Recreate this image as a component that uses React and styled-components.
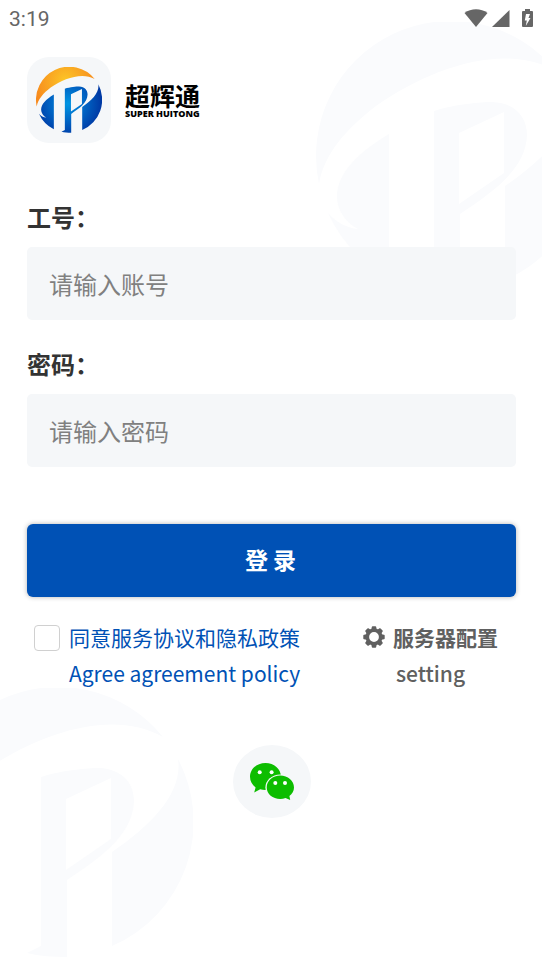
import React from 'react'
import { useState } from 'react'
import styled, { createGlobalStyle } from 'styled-components'

const GlobalStyle = createGlobalStyle`
  * {
    box-sizing: border-box;
  }
  body {
    margin: 0;
    background: #ffffff;
    font-family: 'Noto Sans CJK SC', 'Noto Sans', sans-serif;
  }
  button, input {
    font-family: inherit;
  }
`

const Page = styled.div`
  position: relative;
  min-height: 100vh;
  overflow: hidden;
  background: #ffffff;
`

// faded emblems that lie behind the form
const Watermark = styled.div`
  position: absolute;
  width: 270px;
  height: 270px;
  color: #fafbfd;
  ${({ $place }) => $place === 'top'
    ? 'top: 22px; right: -44px;'
    : 'bottom: 7px; left: -77px;'}

  svg {
    display: block;
  }
`

const StatusBar = styled.header`
  position: relative;
  display: flex;
  align-items: center;
  justify-content: space-between;
  height: 37px;
  padding: 0 9px;
  color: #666666;
  font-family: Roboto, sans-serif;
  font-size: 21px;
  font-weight: 400;
`

const StatusIcons = styled.div`
  display: flex;
  align-items: center;
  gap: 4px;

  svg:last-child {
    margin-left: 8px;
  }
`

const Content = styled.main`
  position: relative;
  display: flex;
  flex-direction: column;
  padding: 20px 26px 40px 27px;
`

const Brand = styled.div`
  display: flex;
  align-items: center;
  gap: 14px;
  margin-bottom: 57px;
`

const LogoTile = styled.div`
  display: flex;
  align-items: center;
  justify-content: center;
  width: 84px;
  height: 86px;
  border-radius: 22px;
  background: #f5f7f9;
`

const BrandText = styled.div`
  color: #000000;

  .name {
    font-size: 25px;
    font-weight: 700;
    line-height: 28px;
  }
  .english {
    font-family: 'Open Sans', sans-serif;
    font-size: 9px;
    font-weight: 800;
    line-height: 10px;
  }
`

const Form = styled.form`
  display: flex;
  flex-direction: column;
`

const Field = styled.div`
  display: flex;
  flex-direction: column;
  gap: 13px;
  margin-bottom: 27px;

  label {
    color: #333333;
    font-size: 24px;
    font-weight: 700;
    line-height: 34px;
  }
  input {
    width: 100%;
    height: 73px;
    padding: 0 22px;
    border: none;
    border-radius: 5px;
    outline: none;
    background: #f5f7f9;
    color: #333333;
    font-size: 24px;
  }
  input::placeholder {
    color: #808080;
    opacity: 1;
  }
`

const LoginButton = styled.button`
  height: 73px;
  margin-top: 30px;
  padding: 0 2px 3px 0;
  border: none;
  border-radius: 6px;
  background: #0051b5;
  box-shadow: 0 0 5px rgba(0, 0, 0, 0.3);
  color: #ffffff;
  font-size: 23px;
  font-weight: 700;
  cursor: pointer;
`

const Options = styled.div`
  display: flex;
  align-items: flex-start;
  justify-content: space-between;
  margin-top: 22px;
  padding: 0 18px 0 7px;
  font-size: 21px;
  line-height: 36px;
`

const Agreement = styled.div`
  display: flex;
  align-items: flex-start;
  gap: 9px;

  input {
    appearance: none;
    width: 26px;
    height: 26px;
    margin: 6px 0 0;
    border: 1px solid #d0d0d0;
    border-radius: 4px;
    background: #ffffff;
  }
  input:checked {
    background: #0051b5;
  }
  label {
    color: #0051b5;
  }
  span {
    display: block;
  }
`

const SettingButton = styled.button`
  padding: 0;
  border: none;
  background: none;
  color: #606060;
  font-size: 21px;
  font-weight: 700;
  line-height: 36px;
  cursor: pointer;

  .title {
    display: flex;
    align-items: center;
    gap: 8px;
  }
  .english {
    display: block;
    font-weight: 500;
  }
`

const WechatButton = styled.button`
  display: flex;
  align-items: center;
  justify-content: center;
  align-self: center;
  width: 78px;
  height: 73px;
  margin-top: 54px;
  padding: 0;
  border: none;
  border-radius: 50%;
  background: #f5f7f9;
  cursor: pointer;
`

function Emblem ({ size, top = 'currentColor', body = 'currentColor' }) {
  return (
    <svg width={size} height={size} viewBox='0 0 270 270' aria-hidden='true'>
      <defs>
        <radialGradient id='sun' gradientUnits='userSpaceOnUse' cx='120' cy='55' r='130'>
          <stop offset='0' stopColor='#fcc527' />
          <stop offset='1' stopColor='#f78a1d' />
        </radialGradient>
        <radialGradient id='sea' gradientUnits='userSpaceOnUse' cx='130' cy='150' r='135'>
          <stop offset='0' stopColor='#0096e3' />
          <stop offset='0.5' stopColor='#0067c6' />
          <stop offset='1' stopColor='#003aa5' />
        </radialGradient>
      </defs>
      <path fill={top} d='M3 162A135 135 0 0 1 240 49C190 20 115 45 60 84C30 107 8 132 3 162Z' />
      <g fill={body}>
        <path d='M73 112C40 132 21 152 21 175C21 188 30 201 42 207C30 206 20 200 12 191A135 135 0 0 0 73 255Z' />
        <path fillRule='evenodd' d='M118 89C140 82 165 80 176 80C200 81 211 96 211 113C210 148 175 171 144 192V269C130 269 116 268 104 265L118 258ZM143 111V182L188 151V90Z' />
        <path d='M189 164C230 136 260 104 255 71A135 135 0 0 1 189 258Z' />
      </g>
    </svg>
  )
}

function GearIcon () {
  const teeth = [0, 45, 90, 135]
  return (
    <svg width='22' height='22' viewBox='0 0 22 22' aria-hidden='true'>
      {teeth.map(angle => (
        <path
          key={angle}
          d='M8 5L8.800 1Q8.900 0.300 9.600 0.300H12.400Q13.100 0.300 13.200 1L14 5ZM8 17H14L13.200 21Q13.100 21.700 12.400 21.700H9.600Q8.900 21.700 8.800 21Z'
          fill='currentColor'
          transform={`rotate(${angle} 11 11)`}
        />
      ))}
      <circle cx='11' cy='11' r='6.700' fill='none' stroke='currentColor' strokeWidth='3.600' />
    </svg>
  )
}

function WechatIcon () {
  return (
    <svg width='44' height='37' viewBox='0 0 44 37' aria-hidden='true'>
      <path fill='#0dbd00' d='M15.500 0C7 0 0 6 0 13.800C0 18.200 2.200 22 5.600 24.400L4.200 29.400L10.200 26.300C12 26.900 14 27.200 16 27.100C24 27 31 21 31 13.800C31 6 24 0 15.500 0Z' />
      <ellipse cx='30.200' cy='24.600' rx='14.800' ry='13.200' fill='#f5f7f9' />
      <path fill='#0dbd00' d='M30.200 12.600C22.700 12.600 16.700 17.800 16.700 24.500C16.700 31 22.700 36 30.200 36C32.200 36 33.900 35.700 35.500 35.100L40.200 37L39.400 33.100C42.200 31 44 28 44 24.500C44 17.800 37.800 12.600 30.200 12.600Z' />
      <g fill='#ffffff'>
        <circle cx='9.700' cy='9.300' r='2' />
        <circle cx='21.600' cy='9.300' r='2' />
        <circle cx='25.300' cy='20' r='2' />
        <circle cx='35' cy='20' r='2' />
      </g>
    </svg>
  )
}

export default function App () {

  const [ login, setLogin ] = useState({ account: '', password: '' })
  const [ agree, setAgree ] = useState(false)

  const handleChange = (e) => {
    setLogin({...login, [e.target.name]: e.target.value})
  }

  const handleSubmit = (e) => {
    e.preventDefault()
  }

  return (
    <Page>
      <GlobalStyle />
      <Watermark $place='top'><Emblem size={270} /></Watermark>
      <Watermark $place='bottom'><Emblem size={270} /></Watermark>

      <StatusBar>
        <span>3:19</span>
        <StatusIcons>
          <svg width='24' height='20' viewBox='0 0 24 20' fill='currentColor' aria-hidden='true'>
            <path d='M0.500 4C7 -1 17 -1 23.500 4L12 18Z' />
          </svg>
          <svg width='18' height='20' viewBox='0 0 18 20' fill='currentColor' aria-hidden='true'>
            <path d='M0 18L17.500 1V18Z' />
          </svg>
          <svg width='11' height='20' viewBox='0 0 11 20' aria-hidden='true'>
            <path fill='currentColor' d='M3 0H8V2H10Q11 2 11 3V17Q11 18 10 18H1Q0 18 0 17V3Q0 2 1 2H3Z' />
            <path fill='#ffffff' d='M4 5H8L6.500 9H8.500L3.800 17L4.800 11.500H2.800Z' />
          </svg>
        </StatusIcons>
      </StatusBar>

      <Content>
        <Brand>
          <LogoTile><Emblem size={66} top='url(#sun)' body='url(#sea)' /></LogoTile>
          <BrandText>
            <div className='name'>超辉通</div>
            <div className='english'>SUPER HUITONG</div>
          </BrandText>
        </Brand>

        <Form onSubmit={handleSubmit}>
          <Field>
            <label htmlFor='account'>工号：</label>
            <input id='account' type='text' name='account' value={login.account} onChange={handleChange} placeholder='请输入账号' />
          </Field>
          <Field>
            <label htmlFor='password'>密码：</label>
            <input id='password' type='password' name='password' value={login.password} onChange={handleChange} placeholder='请输入密码' />
          </Field>
          <LoginButton type='submit'>登 录</LoginButton>

          <Options>
            <Agreement>
              <input id='agree' type='checkbox' checked={agree} onChange={() => setAgree(!agree)} />
              <label htmlFor='agree'>
                <span>同意服务协议和隐私政策</span>
                <span>Agree agreement policy</span>
              </label>
            </Agreement>
            <SettingButton type='button'>
              <span className='title'><GearIcon />服务器配置</span>
              <span className='english'>setting</span>
            </SettingButton>
          </Options>
        </Form>

        <WechatButton type='button' aria-label='WeChat'><WechatIcon /></WechatButton>
      </Content>
    </Page>
  )
}
